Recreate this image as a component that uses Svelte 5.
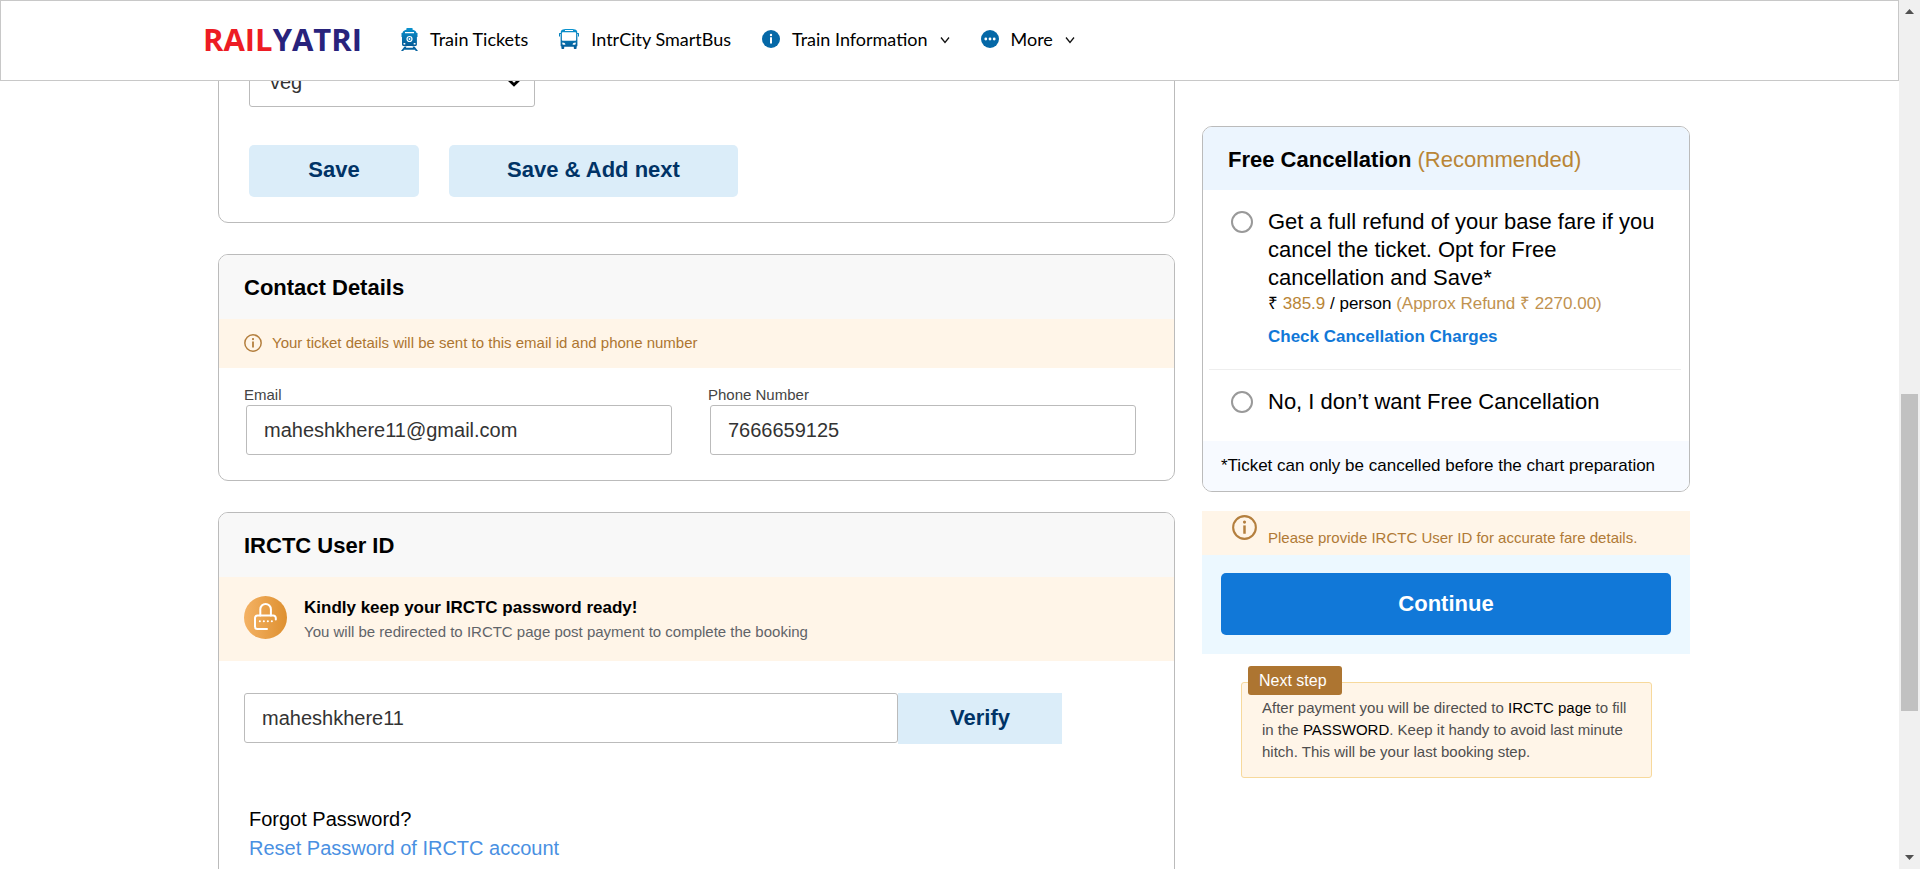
<script>
  let meal = $state('veg');
  let email = $state('maheshkhere11@gmail.com');
  let phone = $state('7666659125');
  let userId = $state('maheshkhere11');
  let cancellation = $state('');
</script>

{#snippet chevron()}
  <svg class="chevron" viewBox="0 0 10 10" aria-hidden="true">
    <path d="M1 3.5 5 8.5 9 3.5" fill="none" stroke="#111" stroke-width="1.300" />
  </svg>
{/snippet}

{#snippet info(cls)}
  <svg class={cls} viewBox="0 0 24 24" aria-hidden="true">
    <circle cx="12" cy="12" r="10.9" fill="none" stroke="#b47f3e" stroke-width="2" />
    <circle cx="12" cy="6.8" r="1.5" fill="#b47f3e" />
    <path d="M12 10v8" stroke="#b47f3e" stroke-width="2.4" />
  </svg>
{/snippet}

<div class="window">
  <div class="page">
    <header>
      <a class="logo" href="#home"><span>RAIL</span>YATRI</a>
      <nav>
        <a href="#trains">
          <svg class="train" viewBox="0 0 17 23" aria-hidden="true">
            <defs>
              <linearGradient id="blue" x1="0" y1="0" x2="0" y2="1">
                <stop offset="0" stop-color="#0a93cf" />
                <stop offset="1" stop-color="#055a96" />
              </linearGradient>
            </defs>
            <path fill="url(#blue)" fill-rule="evenodd" d="M5.500 0h6v1.600l2.600 1.200c.9.500 1.300 1.200 1.400 2.200h1v4h-.6v7.500c0 .8-.6 1.500-1.400 1.500h-12C1.700 18 1 17.300 1 16.500V9H.5V5h1c.1-1 .5-1.700 1.400-2.200l2.600-1.200zM4 5.300h9V4.100H4zM2.500 15v1.600h1.800V15zM12.700 15v1.600h1.800V15z" />
            <circle cx="8.5" cy="11" r="2.500" fill="#0879b5" stroke="#fff" stroke-width="1.200" />
            <circle cx="8.5" cy="11" r=".9" fill="#fff" />
            <path fill="#0663a0" d="M3.500 18.600h2l-.6 1.200h7.200l-.6-1.200h2L17 23h-2.300l-.7-1.300H3L2.300 23H0z" />
          </svg>
          Train Tickets
        </a>
        <a href="#bus">
          <svg class="bus" viewBox="0 0 20 20" aria-hidden="true">
            <path fill="url(#blue)" fill-rule="evenodd" d="M4 .4C6 0 14 0 16 .4c1.300.2 2 1 2.200 2.200V4h1.300c.4 0 .5.200.5.500v3h-1V5h-.6v11.500c0 .6-.3 1-.8 1.100v1.700c0 .4-.3.7-.7.7h-1.400c-.4 0-.7-.3-.7-.7v-1.600H5.200v1.600c0 .4-.3.7-.7.7H3.100c-.4 0-.7-.3-.7-.7v-1.700c-.5-.1-.8-.5-.8-1.100V5H1v2.500H0v-3c0-.3.100-.5.500-.5h1.300V2.600C2 1.400 2.700.6 4 .4zM6 1.100v1h8v-1zM4 3.200c-.7 0-1.100.4-1.100 1.100v6.500c0 .6.4 1 1.100 1h12c.7 0 1.100-.4 1.100-1V4.300c0-.7-.4-1.100-1.100-1.100zM3.300 13.500v1.500c.1.500.4.700.9.700h2.200c0-1.400-1.200-2.200-3.100-2.200zM16.700 13.500c-1.900 0-3.100.8-3.100 2.200h2.200c.5 0 .8-.2.900-.7z" />
          </svg>
          IntrCity SmartBus
        </a>
        <button type="button">
          <svg class="disc" viewBox="0 0 18 18" aria-hidden="true">
            <circle cx="9" cy="9" r="9" fill="#0568a7" />
            <circle cx="9" cy="5" r="1.200" fill="#fff" />
            <path d="M9 7.300v6.200" stroke="#fff" stroke-width="2" />
          </svg>
          Train Information
          {@render chevron()}
        </button>
        <button type="button">
          <svg class="disc" viewBox="0 0 18 18" aria-hidden="true">
            <circle cx="9" cy="9" r="9" fill="#0568a7" />
            <g fill="#fff">
              <circle cx="4.800" cy="9" r="1.400" />
              <circle cx="9" cy="9" r="1.400" />
              <circle cx="13.200" cy="9" r="1.400" />
            </g>
          </svg>
          More
          {@render chevron()}
        </button>
      </nav>
    </header>

    <div class="viewport">
      <main>
        <div class="column">
          <section class="card passenger">
            <div class="meal">
              <select aria-label="Meal preference" bind:value={meal}>
                <option value="veg">veg</option>
                <option value="non-veg">non-veg</option>
              </select>
              <svg viewBox="0 0 14 9" aria-hidden="true">
                <path d="M1.500 1.500 7 6.800 12.500 1.500" fill="none" stroke="#000" stroke-width="2.800" />
              </svg>
            </div>
            <div class="actions">
              <button type="button" class="soft save">Save</button>
              <button type="button" class="soft save-next">Save &amp; Add next</button>
            </div>
          </section>

          <section class="card">
            <h2>Contact Details</h2>
            <p class="notice">{@render info('small')}Your ticket details will be sent to this email id and phone number</p>
            <div class="fields">
              <div class="field">
                <label for="email">Email</label>
                <input id="email" type="email" bind:value={email} />
              </div>
              <div class="field">
                <label for="phone">Phone Number</label>
                <input id="phone" type="tel" bind:value={phone} />
              </div>
            </div>
          </section>

          <section class="card">
            <h2>IRCTC User ID</h2>
            <div class="ready">
              <svg viewBox="0 0 43 43" aria-hidden="true">
                <defs>
                  <linearGradient id="amber" x1="0" y1="0" x2="1" y2="0">
                    <stop offset="0" stop-color="#f4b264" />
                    <stop offset="1" stop-color="#de9030" />
                  </linearGradient>
                </defs>
                <circle cx="21.500" cy="21.500" r="21.500" fill="url(#amber)" />
                <g fill="none" stroke="#fff" stroke-width="2" stroke-linecap="round" stroke-linejoin="round">
                  <path d="M16.300 19.500v-6.200a5.300 5.300 0 0 1 10.600 0v6.200" />
                  <path d="M31.800 23.500V22a2.500 2.500 0 0 0-2.500-2.500H13.500A2.500 2.500 0 0 0 11 22v8.500a2.500 2.500 0 0 0 2.500 2.500H23" />
                  <path d="M15.800 25.300h.1M19.800 25.300h.1M23.800 25.300h.1M27.800 25.300h.1" />
                </g>
              </svg>
              <div>
                <strong>Kindly keep your IRCTC password ready!</strong>
                <p>You will be redirected to IRCTC page post payment to complete the booking</p>
              </div>
            </div>
            <div class="verify">
              <input aria-label="IRCTC User ID" type="text" bind:value={userId} />
              <button type="button" class="soft">Verify</button>
            </div>
            <div class="forgot">
              <p>Forgot Password?</p>
              <a href="#reset">Reset Password of IRCTC account</a>
            </div>
          </section>
        </div>

        <aside>
          <section class="card plan">
            <h2>Free Cancellation <span>(Recommended)</span></h2>
            <div class="option">
              <input id="free" type="radio" name="cancellation" value="free" bind:group={cancellation} />
              <div>
                <label for="free">Get a full refund of your base fare if you cancel the ticket. Opt for Free cancellation and Save*</label>
                <p class="price">₹ <span>385.9</span> / person <span class="refund">(Approx Refund ₹ 2270.00)</span></p>
                <a href="#charges">Check Cancellation Charges</a>
              </div>
            </div>
            <div class="option">
              <input id="none" type="radio" name="cancellation" value="none" bind:group={cancellation} />
              <label for="none">No, I don’t want Free Cancellation</label>
            </div>
            <p class="terms">*Ticket can only be cancelled before the chart preparation</p>
          </section>

          <p class="fare-note">{@render info('large')}<span>Please provide IRCTC User ID for accurate fare details.</span></p>
          <div class="checkout">
            <button type="button">Continue</button>
          </div>

          <div class="next">
            <strong>Next step</strong>
            <p>After payment you will be directed to <b>IRCTC page</b> to fill in the <b>PASSWORD</b>. Keep it handy to avoid last minute hitch. This will be your last booking step.</p>
          </div>
        </aside>
      </main>
    </div>
  </div>

  <div class="scrollbar" aria-hidden="true">
    <svg viewBox="0 0 21 21"><path d="M6 14h9L10.500 9z" fill="#505050" /></svg>
    <div class="before"></div>
    <div class="thumb"></div>
    <div class="after"></div>
    <svg viewBox="0 0 21 21"><path d="M6 7h9l-4.500 5z" fill="#505050" /></svg>
  </div>
</div>

<style>
  :global(body) {
    margin: 0;
    background: #fff;
  }

  .window {
    display: flex;
    height: 100vh;
    overflow: hidden;
    font-family: "Liberation Sans", Arial, sans-serif;
    color: #000;
  }

  .window * {
    box-sizing: border-box;
  }

  .page {
    flex: 1;
    min-width: 0;
    display: flex;
    flex-direction: column;
  }

  h2,
  p {
    margin: 0;
  }

  a {
    text-decoration: none;
  }

  button,
  input,
  select {
    margin: 0;
    font-family: inherit;
  }

  button {
    border: 0;
    cursor: pointer;
  }

  svg {
    display: block;
    flex: none;
  }

  /* Top bar */
  header {
    flex: none;
    display: flex;
    align-items: center;
    gap: 39px;
    height: 81px;
    padding: 0 202px 3px;
    border: 1px solid #c8c8c8;
    background: #fff;
  }

  .logo {
    font: bold 31px/40px "Open Sans", sans-serif;
    color: #28237c;
  }

  .logo span {
    color: #ed1c24;
  }

  nav {
    display: flex;
    align-items: center;
    gap: 31px;
  }

  nav a,
  nav button {
    display: flex;
    align-items: center;
    gap: 12px;
    padding: 0;
    background: none;
    font: 18px/24px Lato, sans-serif;
    color: #000;
    white-space: nowrap;
  }

  .train {
    width: 17px;
    height: 23px;
  }

  .bus {
    width: 20px;
    height: 20px;
  }

  .disc {
    width: 18px;
    height: 18px;
  }

  .chevron {
    width: 10px;
    height: 10px;
  }

  /* Scrolled content */
  .viewport {
    flex: 1;
    min-height: 0;
    overflow: hidden;
  }

  main {
    display: grid;
    grid-template-columns: 957fr 488fr;
    gap: 27px;
    padding: 0 209px 0 218px;
  }

  .column {
    display: flex;
    flex-direction: column;
    gap: 31px;
    margin-top: -64px;
  }

  .card {
    border: 1px solid #bbb;
    border-radius: 10px;
    background: #fff;
    overflow: hidden;
  }

  h2 {
    padding: 2px 25px 0;
    background: #f8f8f8;
    font-size: 22px;
    line-height: 62px;
  }

  .passenger {
    padding: 39px 30px 25px;
  }

  .meal {
    position: relative;
    width: 286px;
  }

  .meal svg {
    position: absolute;
    right: 14px;
    top: 21px;
    width: 14px;
    height: 9px;
    pointer-events: none;
  }

  select,
  .field input,
  .verify input {
    display: block;
    width: 100%;
    height: 50px;
    padding: 0 17px;
    border: 1px solid #bbb;
    border-radius: 3px;
    background: #fff;
    color: #333;
    font-size: 20px;
    outline: 0;
  }

  select {
    appearance: none;
    padding: 0 20px;
  }

  .actions {
    display: flex;
    gap: 30px;
    margin-top: 38px;
  }

  .soft {
    height: 52px;
    padding: 0 0 2px;
    border-radius: 5px;
    background: #dbedf9;
    color: #003366;
    font-size: 22px;
    font-weight: bold;
  }

  .save {
    width: 170px;
  }

  .save-next {
    width: 289px;
  }

  .notice {
    display: flex;
    align-items: center;
    gap: 10px;
    padding: 0 25px 2px;
    background: #fff5e8;
    color: #ad7531;
    font-size: 15px;
    line-height: 47px;
  }

  .small {
    width: 18px;
    height: 18px;
  }

  .large {
    width: 25px;
    height: 25px;
  }

  .fields {
    display: grid;
    grid-template-columns: 1fr 1fr;
    gap: 36px;
    padding: 17px 38px 25px 25px;
  }

  .field label {
    display: block;
    color: #444;
    font-size: 15px;
    line-height: 20px;
  }

  .field {
    padding-right: 2px;
  }

  .field input {
    margin-left: 2px;
  }

  .ready {
    display: flex;
    gap: 17px;
    padding: 19px 25px 17px;
    background: #fff5e8;
    line-height: 24px;
  }

  .ready svg {
    width: 43px;
    height: 43px;
  }

  .ready strong {
    display: block;
    font-size: 17px;
  }

  .ready p {
    color: #5f6469;
    font-size: 15px;
  }

  .verify {
    display: flex;
    align-items: flex-start;
    padding: 32px 112px 0 25px;
  }

  .verify input {
    flex: 1;
    min-width: 0;
  }

  .verify .soft {
    width: 164px;
    height: 51px;
    border-radius: 0;
  }

  .forgot {
    padding: 61px 30px 40px;
    font-size: 20px;
    line-height: 29px;
  }

  .forgot a {
    color: #4a90e2;
  }

  /* Right column */
  aside {
    padding-top: 45px;
  }

  .plan h2 {
    background: #ecf5fe;
    line-height: 61px;
  }

  .plan h2 span {
    color: #b98536;
    font-weight: normal;
  }

  .option {
    display: flex;
    align-items: flex-start;
    gap: 15px;
    margin: 0 8px 0 6px;
    padding: 18px 12px 20px 22px;
    font-size: 17px;
    line-height: 24px;
  }

  .option + .option {
    border-top: 1px solid #eee;
  }

  .option input {
    appearance: none;
    flex: none;
    width: 22px;
    height: 22px;
    margin-top: 3px;
    border: 2px solid #999;
    border-radius: 50%;
  }

  .option input:checked {
    background: radial-gradient(circle, #1178d8 5px, #fff 6px);
  }

  .option label {
    display: block;
    font-size: 22px;
    line-height: 28px;
  }

  .price span {
    color: #b98536;
  }

  .price .refund {
    color: #bf9250;
  }

  .option a {
    display: block;
    margin-top: 9px;
    color: #1178d8;
    font-weight: bold;
  }

  .terms {
    margin-top: 5px;
    padding-left: 18px;
    background: #f7faff;
    font-size: 17px;
    line-height: 50px;
  }

  .fare-note {
    display: flex;
    align-items: flex-start;
    gap: 11px;
    margin-top: 19px;
    padding: 4px 20px 5px 30px;
    background: #fff5e8;
    color: #b07a36;
    font-size: 15px;
    line-height: 24px;
  }

  .fare-note span {
    padding-top: 11px;
  }

  .checkout {
    padding: 18px 19px 19px;
    background: #ecf8ff;
  }

  .checkout button {
    display: block;
    width: 100%;
    height: 62px;
    border-radius: 5px;
    background: #1178d8;
    color: #fff;
    font-size: 22px;
    font-weight: bold;
  }

  .next {
    position: relative;
    margin: 28px 38px 0 39px;
    padding: 14px 20px;
    border: 1px solid #f7d99c;
    border-radius: 3px;
    background: #fff5e8;
    color: #4f4f4f;
    font-size: 15px;
    line-height: 22px;
  }

  .next strong {
    position: absolute;
    top: -17px;
    left: 6px;
    padding: 0 15px 0 11px;
    border-radius: 3px;
    background: #ad7531;
    color: #fff;
    font-size: 16px;
    font-weight: normal;
    line-height: 29px;
  }

  .next b {
    color: #000;
    font-weight: normal;
  }

  /* Window scrollbar */
  .scrollbar {
    flex: none;
    display: flex;
    flex-direction: column;
    align-items: stretch;
    width: 21px;
    background: #f0f0f0;
  }

  .scrollbar svg {
    width: 21px;
    height: 21px;
  }

  .before {
    flex: 373;
  }

  .thumb {
    flex: 317;
    margin: 0 2px;
    background: #c1c1c1;
  }

  .after {
    flex: 137;
  }
</style>
